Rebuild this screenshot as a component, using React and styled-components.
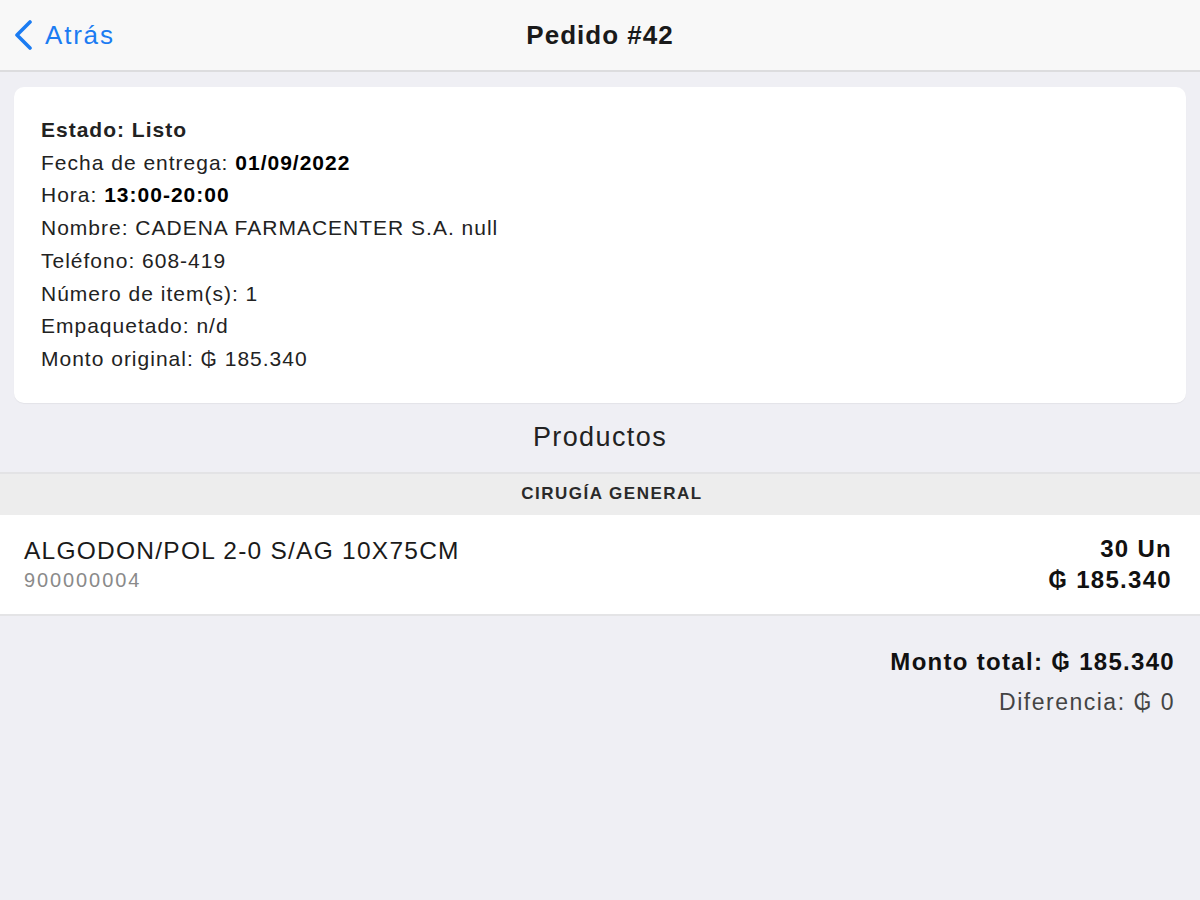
import React from "react";
import styled, { createGlobalStyle } from "styled-components";

const Global = createGlobalStyle`
  html, body { margin: 0; padding: 0; }
  body {
    background: #efeff4;
    font-family: "Liberation Sans", Arial, "DejaVu Sans", sans-serif;
    color: #111;
  }
`;

const Page = styled.div`
  min-height: 100vh;
  background: #efeff4;
`;

const NavBar = styled.header`
  height: 72px;
  box-sizing: border-box;
  display: grid;
  grid-template-columns: 1fr auto 1fr;
  align-items: center;
  background: #f8f8f8;
  border-bottom: 2px solid #dcdcde;
`;

const BackButton = styled.button`
  justify-self: start;
  display: flex;
  align-items: center;
  gap: 12px;
  padding: 0 0 0 13px;
  border: 0;
  background: none;
  color: #1b7cf2;
  font-family: inherit;
  font-size: 26px;
  letter-spacing: 1.8px;
  cursor: pointer;
`;

const Title = styled.h1`
  margin: 0;
  font-size: 26px;
  font-weight: 600;
  letter-spacing: 1px;
  color: #1a1a1a;
`;

const Card = styled.section`
  margin: 15px 14px 0;
  padding: 27px 27px 27px;
  background: #fff;
  border-radius: 10px;
  box-shadow: 0 1px 1px rgba(0, 0, 0, 0.05);
`;

const InfoLine = styled.div`
  font-size: 21px;
  line-height: 32.7px;
  letter-spacing: 1px;
  color: #222;
  font-weight: ${(p) => (p.$bold ? 700 : 400)};
  b { font-weight: 700; color: #000; }
`;

const SectionTitle = styled.h2`
  margin: 0;
  height: 69px;
  display: flex;
  align-items: center;
  justify-content: center;
  font-size: 27px;
  font-weight: 400;
  letter-spacing: 1.4px;
  color: #222;
`;

const GroupHeader = styled.div`
  height: 43px;
  box-sizing: border-box;
  display: flex;
  align-items: center;
  justify-content: center;
  padding-left: 24px;
  background: #ededed;
  border-top: 2px solid #e3e3e5;
  font-size: 17px;
  font-weight: 600;
  letter-spacing: 1.5px;
  color: #2a2a2a;
  text-transform: uppercase;
`;

const ItemRow = styled.div`
  height: 101px;
  box-sizing: border-box;
  display: flex;
  align-items: center;
  justify-content: space-between;
  padding: 0 28px 0 24px;
  background: #fff;
  border-bottom: 2px solid #e4e4e6;
`;

const ItemInfo = styled.div`
  display: flex;
  flex-direction: column;
  gap: 4px;
`;

const ItemName = styled.div`
  font-size: 24.5px;
  letter-spacing: 1.25px;
  color: #1a1a1a;
`;

const ItemCode = styled.div`
  font-size: 20px;
  letter-spacing: 1.9px;
  color: #8a8a8a;
`;

const ItemAmounts = styled.div`
  display: flex;
  flex-direction: column;
  align-items: flex-end;
  gap: 3px;
  font-size: 24px;
  font-weight: 700;
  letter-spacing: 1.3px;
  color: #111;
`;

const Totals = styled.div`
  display: flex;
  flex-direction: column;
  align-items: flex-end;
  gap: 13px;
  padding: 32px 25px 0 0;
`;

const TotalLine = styled.div`
  font-size: ${(p) => (p.$strong ? "24px" : "23px")};
  font-weight: ${(p) => (p.$strong ? 700 : 400)};
  letter-spacing: ${(p) => (p.$strong ? "1.3px" : "1.5px")};
  color: ${(p) => (p.$strong ? "#111" : "#444")};
`;

const Chevron = () => (
  <svg width="20" height="30" viewBox="0 0 20 30" fill="none">
    <path d="M17 2 L4 15 L17 28" stroke="#1b7cf2" strokeWidth="3.6" strokeLinecap="round" strokeLinejoin="round" />
  </svg>
);

export default function App() {
  return (
    <Page>
      <Global />
      <NavBar>
        <BackButton>
          <Chevron />
          Atrás
        </BackButton>
        <Title>Pedido #42</Title>
        <span />
      </NavBar>
      <Card>
        <InfoLine $bold>Estado: Listo</InfoLine>
        <InfoLine>Fecha de entrega: <b>01/09/2022</b></InfoLine>
        <InfoLine>Hora: <b>13:00-20:00</b></InfoLine>
        <InfoLine>Nombre: CADENA FARMACENTER S.A. null</InfoLine>
        <InfoLine>Teléfono: 608-419</InfoLine>
        <InfoLine>Número de item(s): 1</InfoLine>
        <InfoLine>Empaquetado: n/d</InfoLine>
        <InfoLine>Monto original: ₲ 185.340</InfoLine>
      </Card>
      <SectionTitle>Productos</SectionTitle>
      <GroupHeader>Cirugía General</GroupHeader>
      <ItemRow>
        <ItemInfo>
          <ItemName>ALGODON/POL 2-0 S/AG 10X75CM</ItemName>
          <ItemCode>900000004</ItemCode>
        </ItemInfo>
        <ItemAmounts>
          <div>30 Un</div>
          <div>₲ 185.340</div>
        </ItemAmounts>
      </ItemRow>
      <Totals>
        <TotalLine $strong>Monto total: ₲ 185.340</TotalLine>
        <TotalLine>Diferencia: ₲ 0</TotalLine>
      </Totals>
    </Page>
  );
}
